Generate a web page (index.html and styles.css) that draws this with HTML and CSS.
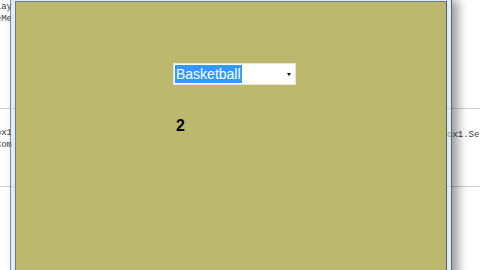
FILE: index.html
```html
<!DOCTYPE html>
<html>
<head>
<meta charset="utf-8">
<link rel="stylesheet" href="styles.css">
</head>
<body>
<div class="editor">
  <div class="rule rule-a"></div>
  <div class="rule rule-b"></div>
  <div class="pane pane-left">
    <div class="code code-top">
      <div class="ln"><span>Display</span></div>
      <div class="ln"><span>ValueMe</span></div>
    </div>
    <div class="code code-mid">
      <div class="ln"><span>ComboBox1</span></div>
      <div class="ln"><span>Com</span></div>
    </div>
  </div>
  <div class="pane pane-right">
    <div class="code code-mid2">
      <div class="ln"><span>ox1.SelectedValue</span></div>
    </div>
  </div>
</div>
<div class="window">
  <div class="client">
    <div class="combo">
      <span class="combo-text">Basketball</span>
      <span class="combo-arrow"></span>
    </div>
    <div class="count">2</div>
  </div>
</div>
</body>
</html>
```
FILE: styles.css
```css
html, body {
  margin: 0;
  padding: 0;
  width: 480px;
  height: 270px;
  overflow: hidden;
  background: #ffffff;
}

.editor {
  position: relative;
  width: 480px;
  height: 270px;
  display: flex;
  justify-content: space-between;
  font-family: "Liberation Mono", monospace;
  font-size: 9px;
  color: #3a3a3a;
}

.rule {
  position: absolute;
  left: 0;
  right: 0;
  height: 1px;
  background: #cfcfcf;
}
.rule-a { top: 108px; }
.rule-b { top: 186px; }

.pane {
  display: flex;
  flex-direction: column;
  overflow: hidden;
}
.pane-left { width: 12px; }
.pane-right { width: 33px; }

.ln {
  height: 12px;
  line-height: 12px;
  display: flex;
  justify-content: flex-end;
  white-space: nowrap;
}
.pane-right .ln { justify-content: flex-start; }

.code-top { padding-top: 1px; }
.code-mid { margin-top: 102px; }
.code-mid2 { margin-top: 129px; }

.window {
  position: absolute;
  left: 10px;
  top: 0;
  width: 432px;
  height: 280px;
  border-left: 1px solid rgba(90, 100, 110, 0.7);
  border-right: 1px solid rgba(60, 70, 80, 0.8);
  background: rgba(200, 220, 240, 0.55);
  box-shadow: 6px 0 10px rgba(0, 0, 0, 0.4);
  padding: 1px 4px 0 4px;
}

.client {
  height: 100%;
  background: #bcb86d;
  border-left: 1px solid #6d7a7e;
  border-right: 1px solid #4f5a5e;
  border-top: 1px solid #6d7a7e;
  display: flex;
  flex-direction: column;
  align-items: flex-start;
  padding: 61px 0 0 157px;
  box-sizing: border-box;
}

.combo {
  width: 123px;
  height: 22px;
  box-sizing: border-box;
  background: #ffffff;
  border: 1px solid #e4e4d8;
  display: flex;
  align-items: center;
  padding: 0 4px 0 1px;
  justify-content: space-between;
}

.combo-text {
  font-family: "Liberation Sans", Arial, sans-serif;
  font-size: 14px;
  line-height: 18px;
  background: #3399ff;
  color: #ffffff;
  padding: 0 1px;
}

.combo-arrow {
  width: 0;
  height: 0;
  border-left: 2.5px solid transparent;
  border-right: 2.5px solid transparent;
  border-top: 3px solid #000000;
  margin-top: 1px;
}

.count {
  margin-top: 33px;
  margin-left: 3px;
  font-family: "Liberation Sans", Arial, sans-serif;
  font-weight: bold;
  font-size: 16px;
  line-height: 16px;
  color: #000000;
}
```
